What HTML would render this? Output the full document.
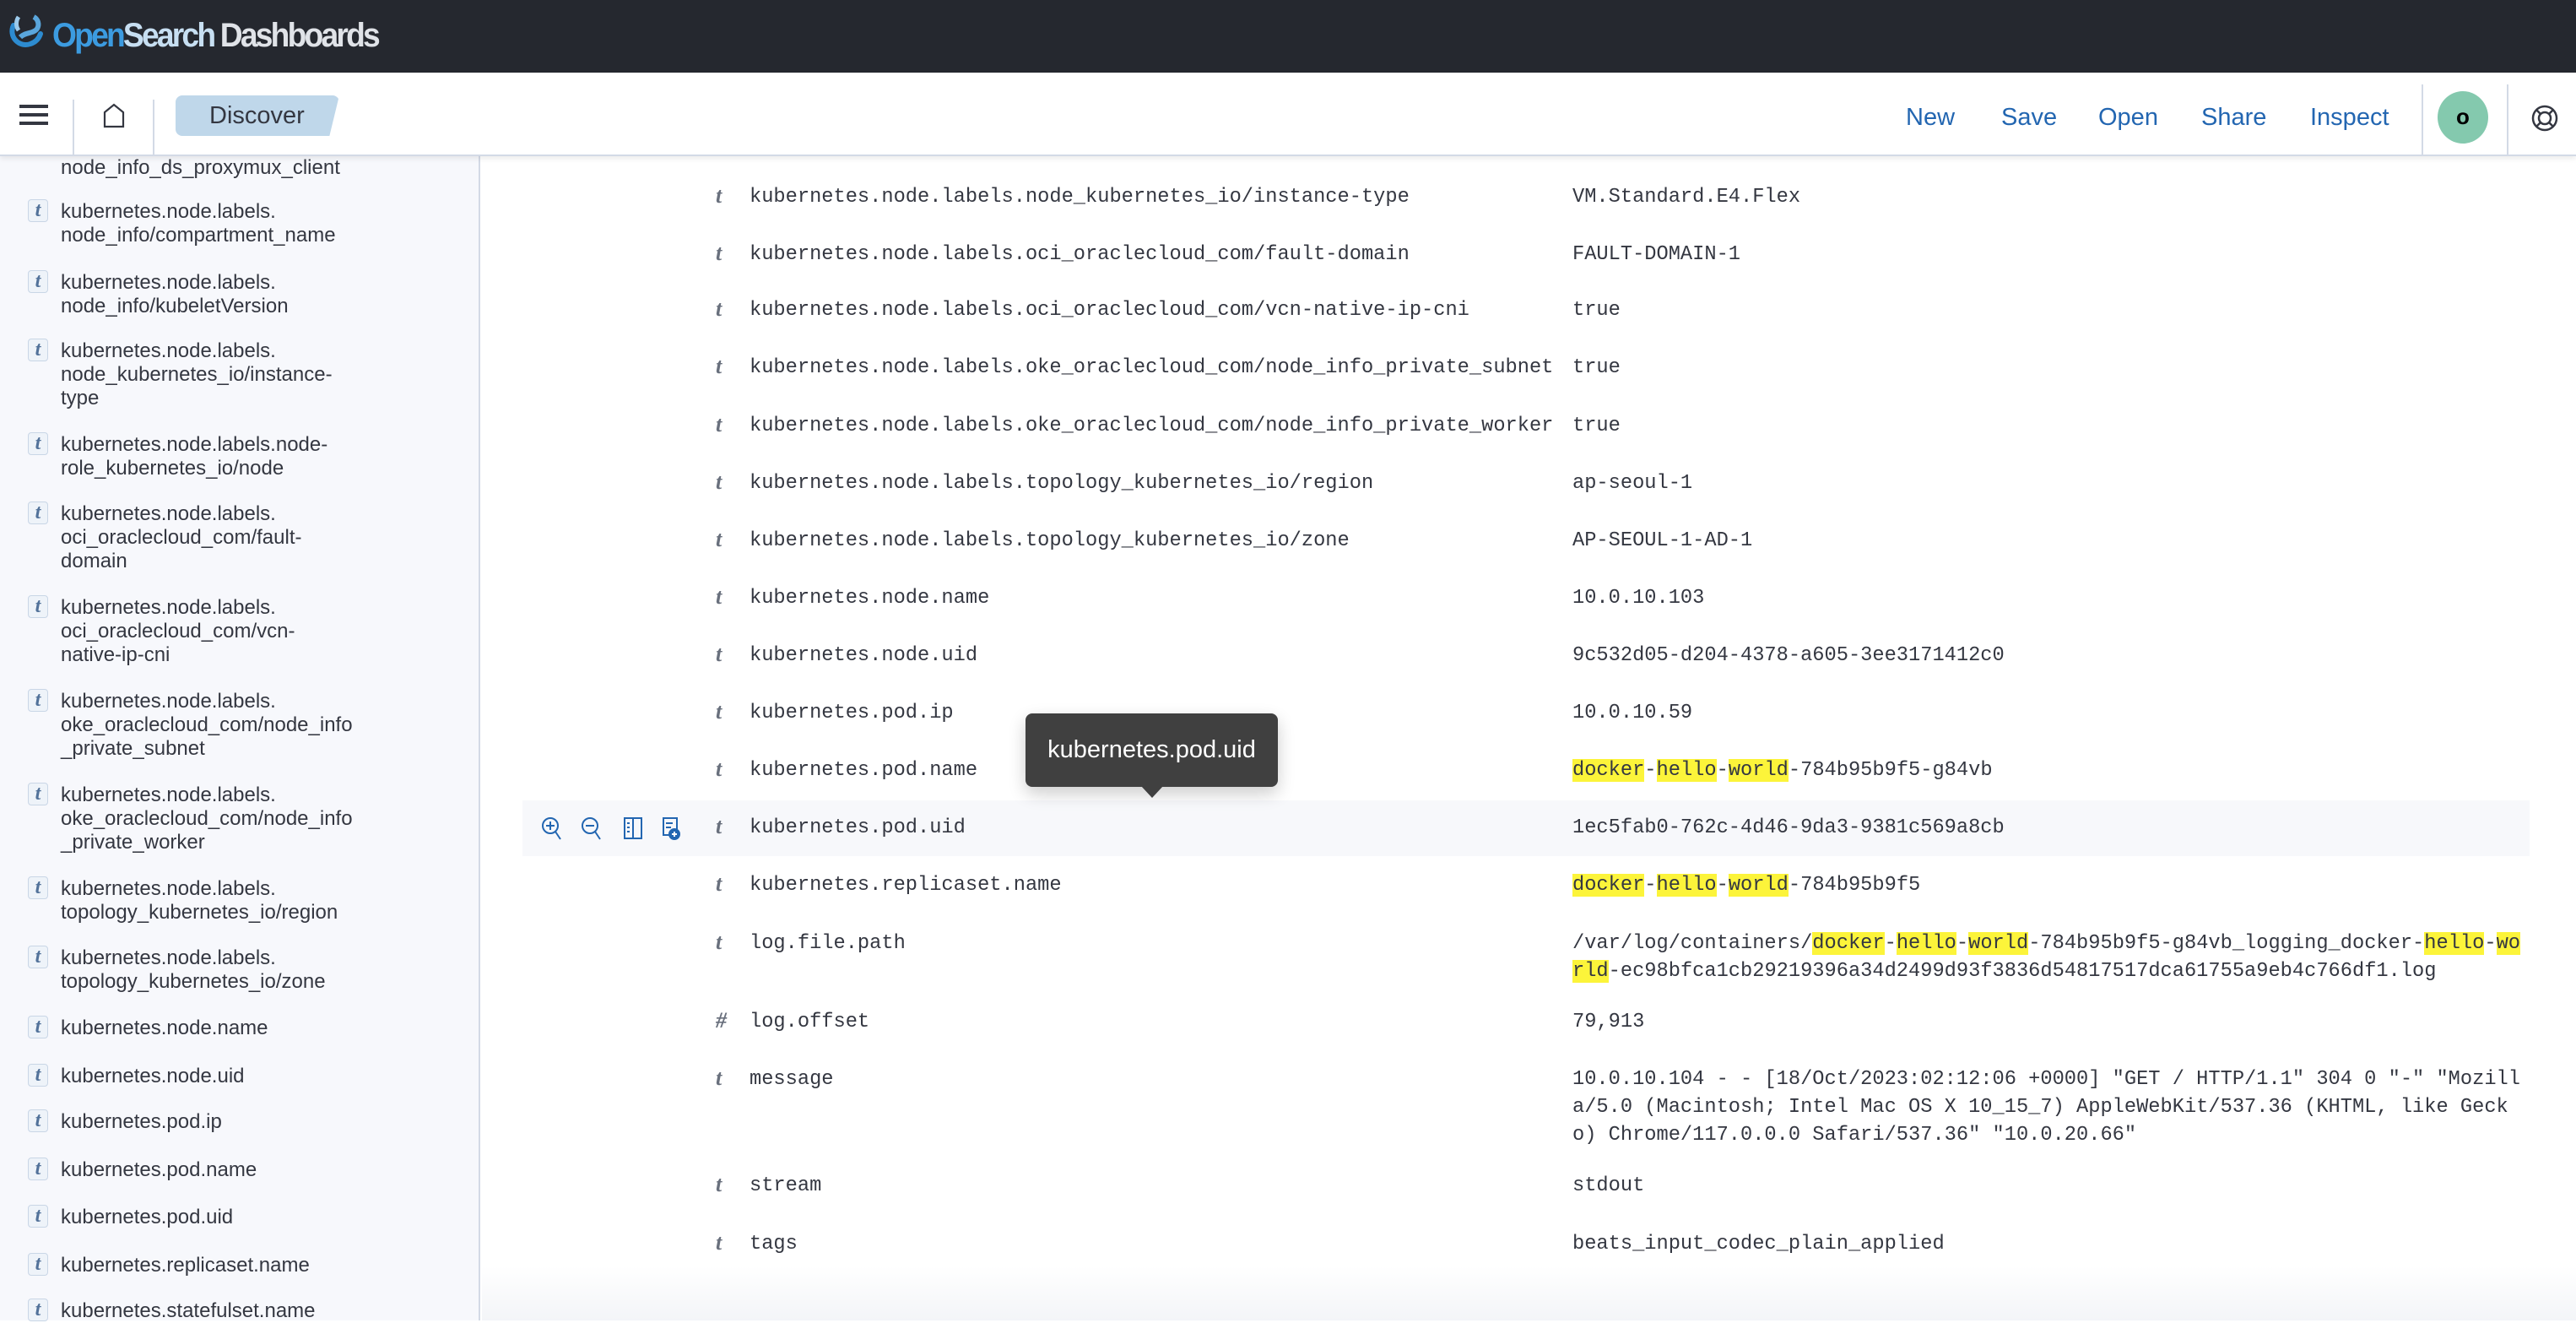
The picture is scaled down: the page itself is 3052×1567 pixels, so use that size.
<!DOCTYPE html>
<html><head><meta charset="utf-8"><style>
*{margin:0;padding:0;box-sizing:border-box}
body{width:3052px;height:1564px;position:relative;overflow:hidden;background:#fff;font-family:"Liberation Sans",sans-serif;color:#343741}
.top{position:absolute;left:0;top:0;width:3052px;height:86px;background:#25282f}
.nav{position:absolute;left:0;top:86px;width:3052px;height:99px;background:#fff;border-bottom:2px solid #d3dae6;box-shadow:0 3px 6px rgba(0,0,0,.08);z-index:5}
.side{position:absolute;left:0;top:0;width:569px;height:1564px;background:#f7f8fc;border-right:2px solid #d3dae6}
.si{position:absolute;left:72px;font-size:24px;line-height:28px;color:#343741;white-space:pre;margin-top:2px}
.tok{position:absolute;left:33px;width:24px;height:27px;border:1.5px solid #c9d6e6;background:#eef3f9;border-radius:4px;font-style:italic;font-weight:bold;color:#52729a;font-size:24px;line-height:25px;text-align:center;font-family:"Liberation Serif",serif}
.r{position:absolute;font-family:"Liberation Mono",monospace;font-size:23.7px;line-height:33px;white-space:pre;color:#343741}
.ty{position:absolute;left:848px;width:16px;font-style:italic;font-weight:bold;color:#69707d;font-size:26px;line-height:30px;font-family:"Liberation Serif",serif}
.f{left:888px}.v{left:1863px}
mark{background:#fcf43a;color:#343741}
.lnk{position:absolute;font-size:29px;color:#2366b1;line-height:34px}
</style></head><body>
<div class="side">
<div class="si" style="top:183px">node_info_ds_proxymux_client</div>
<div class="tok" style="top:236px">t</div><div class="si" style="top:235px">kubernetes.node.labels.
node_info/compartment_name</div>
<div class="tok" style="top:320px">t</div><div class="si" style="top:319px">kubernetes.node.labels.
node_info/kubeletVersion</div>
<div class="tok" style="top:401px">t</div><div class="si" style="top:400px">kubernetes.node.labels.
node_kubernetes_io/instance-
type</div>
<div class="tok" style="top:512px">t</div><div class="si" style="top:511px">kubernetes.node.labels.node-
role_kubernetes_io/node</div>
<div class="tok" style="top:594px">t</div><div class="si" style="top:593px">kubernetes.node.labels.
oci_oraclecloud_com/fault-
domain</div>
<div class="tok" style="top:705px">t</div><div class="si" style="top:704px">kubernetes.node.labels.
oci_oraclecloud_com/vcn-
native-ip-cni</div>
<div class="tok" style="top:816px">t</div><div class="si" style="top:815px">kubernetes.node.labels.
oke_oraclecloud_com/node_info
_private_subnet</div>
<div class="tok" style="top:927px">t</div><div class="si" style="top:926px">kubernetes.node.labels.
oke_oraclecloud_com/node_info
_private_worker</div>
<div class="tok" style="top:1038px">t</div><div class="si" style="top:1037px">kubernetes.node.labels.
topology_kubernetes_io/region</div>
<div class="tok" style="top:1120px">t</div><div class="si" style="top:1119px">kubernetes.node.labels.
topology_kubernetes_io/zone</div>
<div class="tok" style="top:1203px">t</div><div class="si" style="top:1202px">kubernetes.node.name</div>
<div class="tok" style="top:1260px">t</div><div class="si" style="top:1259px">kubernetes.node.uid</div>
<div class="tok" style="top:1314px">t</div><div class="si" style="top:1313px">kubernetes.pod.ip</div>
<div class="tok" style="top:1371px">t</div><div class="si" style="top:1370px">kubernetes.pod.name</div>
<div class="tok" style="top:1427px">t</div><div class="si" style="top:1426px">kubernetes.pod.uid</div>
<div class="tok" style="top:1484px">t</div><div class="si" style="top:1483px">kubernetes.replicaset.name</div>
<div class="tok" style="top:1538px">t</div><div class="si" style="top:1537px">kubernetes.statefulset.name</div>
</div>

<div class="top">
<svg style="position:absolute;left:10px;top:16px" width="46" height="46" viewBox="0 0 46 46"><path d="M30 4a10 10 0 0 1 4 14c-4 6-14 4-20 10" fill="none" stroke="#5aa6dc" stroke-width="6"/><path d="M6 14a16 16 0 0 0 20 22c6-2 10-6 12-12" fill="none" stroke="#2d8bd0" stroke-width="6" stroke-linecap="round"/><path d="M12 4a14 14 0 0 0 0 16" fill="none" stroke="#9ccbec" stroke-width="5"/></svg>
<div style="position:absolute;left:62px;top:16px;font-size:40px;letter-spacing:-3px;line-height:52px;font-weight:bold;transform:scaleX(0.93);transform-origin:left"><span style="color:#3c9be0">Open</span><span style="color:#c7dff2">Search</span><span style="color:#e0e3e8"> Dashboards</span></div>
</div>

<div class="nav">
<div style="position:absolute;left:23px;top:38px;width:34px;height:4px;background:#343741;box-shadow:0 10px 0 #343741,0 20px 0 #343741"></div>
<div style="position:absolute;left:86px;top:32px;width:2px;height:67px;background:#d3dae6"></div>
<svg style="position:absolute;left:120px;top:36px" width="30" height="30" viewBox="0 0 30 30"><path d="M4 28V11L15 2l11 9v17z" fill="none" stroke="#343741" stroke-width="2.2"/></svg>
<div style="position:absolute;left:181px;top:32px;width:2px;height:67px;background:#d3dae6"></div>
<div style="position:absolute;left:208px;top:27px;width:194px;height:48px;background:#bfd7ea;border-radius:8px;clip-path:polygon(0 0,100% 0,94% 100%,0 100%)"></div>
<div style="position:absolute;left:248px;top:32px;font-size:29px;line-height:38px;color:#343741">Discover</div>
<div class="lnk" style="left:2258px;top:36px">New</div>
<div class="lnk" style="left:2371px;top:36px">Save</div>
<div class="lnk" style="left:2486px;top:36px">Open</div>
<div class="lnk" style="left:2608px;top:36px">Share</div>
<div class="lnk" style="left:2737px;top:36px">Inspect</div>
<div style="position:absolute;left:2869px;top:14px;width:2px;height:85px;background:#d3dae6"></div>
<div style="position:absolute;left:2888px;top:22px;width:60px;height:62px;border-radius:50%;background:#84c9ae;text-align:center;font-size:26px;line-height:60px;font-weight:bold;color:#000">o</div>
<div style="position:absolute;left:2970px;top:14px;width:2px;height:85px;background:#d3dae6"></div>
<svg style="position:absolute;left:2998px;top:37px" width="34" height="34" viewBox="0 0 34 34" fill="none" stroke="#343741" stroke-width="2.5"><circle cx="17" cy="17" r="14"/><circle cx="17" cy="17" r="7"/><path d="M7 7l5 5M27 7l-5 5M7 27l5-5M27 27l-5-5"/></svg>
</div>

<div style="position:absolute;left:619px;top:948px;width:2378px;height:66px;background:#f7f8fb"></div>
<svg style="position:absolute;left:638px;top:966px" width="180" height="32" viewBox="0 0 180 32" fill="none" stroke="#2366b1" stroke-width="2"><circle cx="14" cy="12" r="9"/><path d="M14 7v10M9 12h10M20 19l6 9"/><circle cx="61" cy="12" r="9"/><path d="M56 12h10M67 19l6 9"/><rect x="102" y="3" width="20" height="24"/><path d="M112 3v24M105 9h3M105 14h3M105 19h3"/><rect x="148" y="3" width="16" height="20"/><path d="M151 9h8M151 14h6"/><circle cx="161" cy="22" r="6" fill="#2366b1"/><path d="M161 19v6M158 22h6" stroke="#fff"/></svg>

<div class="ty" style="top:217px">t</div><div class="r f" style="top:217px">kubernetes.node.labels.node_kubernetes_io/instance-type</div><div class="r v" style="top:217px">VM.Standard.E4.Flex</div>
<div class="ty" style="top:285px">t</div><div class="r f" style="top:285px">kubernetes.node.labels.oci_oraclecloud_com/fault-domain</div><div class="r v" style="top:285px">FAULT-DOMAIN-1</div>
<div class="ty" style="top:351px">t</div><div class="r f" style="top:351px">kubernetes.node.labels.oci_oraclecloud_com/vcn-native-ip-cni</div><div class="r v" style="top:351px">true</div>
<div class="ty" style="top:419px">t</div><div class="r f" style="top:419px">kubernetes.node.labels.oke_oraclecloud_com/node_info_private_subnet</div><div class="r v" style="top:419px">true</div>
<div class="ty" style="top:488px">t</div><div class="r f" style="top:488px">kubernetes.node.labels.oke_oraclecloud_com/node_info_private_worker</div><div class="r v" style="top:488px">true</div>
<div class="ty" style="top:556px">t</div><div class="r f" style="top:556px">kubernetes.node.labels.topology_kubernetes_io/region</div><div class="r v" style="top:556px">ap-seoul-1</div>
<div class="ty" style="top:624px">t</div><div class="r f" style="top:624px">kubernetes.node.labels.topology_kubernetes_io/zone</div><div class="r v" style="top:624px">AP-SEOUL-1-AD-1</div>
<div class="ty" style="top:692px">t</div><div class="r f" style="top:692px">kubernetes.node.name</div><div class="r v" style="top:692px">10.0.10.103</div>
<div class="ty" style="top:760px">t</div><div class="r f" style="top:760px">kubernetes.node.uid</div><div class="r v" style="top:760px">9c532d05-d204-4378-a605-3ee3171412c0</div>
<div class="ty" style="top:828px">t</div><div class="r f" style="top:828px">kubernetes.pod.ip</div><div class="r v" style="top:828px">10.0.10.59</div>
<div class="ty" style="top:896px">t</div><div class="r f" style="top:896px">kubernetes.pod.name</div><div class="r v" style="top:896px"><mark>docker</mark>-<mark>hello</mark>-<mark>world</mark>-784b95b9f5-g84vb</div>
<div class="ty" style="top:964px">t</div><div class="r f" style="top:964px">kubernetes.pod.uid</div><div class="r v" style="top:964px">1ec5fab0-762c-4d46-9da3-9381c569a8cb</div>
<div class="ty" style="top:1032px">t</div><div class="r f" style="top:1032px">kubernetes.replicaset.name</div><div class="r v" style="top:1032px"><mark>docker</mark>-<mark>hello</mark>-<mark>world</mark>-784b95b9f5</div>
<div class="ty" style="top:1101px">t</div><div class="r f" style="top:1101px">log.file.path</div><div class="r v" style="top:1101px">/var/log/containers/<mark>docker</mark>-<mark>hello</mark>-<mark>world</mark>-784b95b9f5-g84vb_logging_docker-<mark>hello</mark>-<mark>wo</mark>
<mark>rld</mark>-ec98bfca1cb29219396a34d2499d93f3836d54817517dca61755a9eb4c766df1.log</div>
<div class="ty" style="top:1194px">#</div><div class="r f" style="top:1194px">log.offset</div><div class="r v" style="top:1194px">79,913</div>
<div class="ty" style="top:1262px">t</div><div class="r f" style="top:1262px">message</div><div class="r v" style="top:1262px">10.0.10.104 - - [18/Oct/2023:02:12:06 +0000] "GET / HTTP/1.1" 304 0 "-" "Mozill
a/5.0 (Macintosh; Intel Mac OS X 10_15_7) AppleWebKit/537.36 (KHTML, like Geck
o) Chrome/117.0.0.0 Safari/537.36" "10.0.20.66"</div>
<div class="ty" style="top:1388px">t</div><div class="r f" style="top:1388px">stream</div><div class="r v" style="top:1388px">stdout</div>
<div class="ty" style="top:1457px">t</div><div class="r f" style="top:1457px">tags</div><div class="r v" style="top:1457px">beats_input_codec_plain_applied</div>

<div style="position:absolute;left:1215px;top:845px;width:299px;height:87px;background:#404040;border-radius:8px;box-shadow:0 8px 20px rgba(0,0,0,.2);color:#fff;font-size:29px;line-height:87px;text-align:center">kubernetes.pod.uid</div>
<div style="position:absolute;left:1352px;top:931px;width:0;height:0;border-left:13px solid transparent;border-right:13px solid transparent;border-top:14px solid #404040"></div>

<div style="position:absolute;left:571px;top:1500px;width:2481px;height:64px;background:linear-gradient(rgba(255,255,255,0),rgba(235,238,243,.6))"></div>
</body></html>
